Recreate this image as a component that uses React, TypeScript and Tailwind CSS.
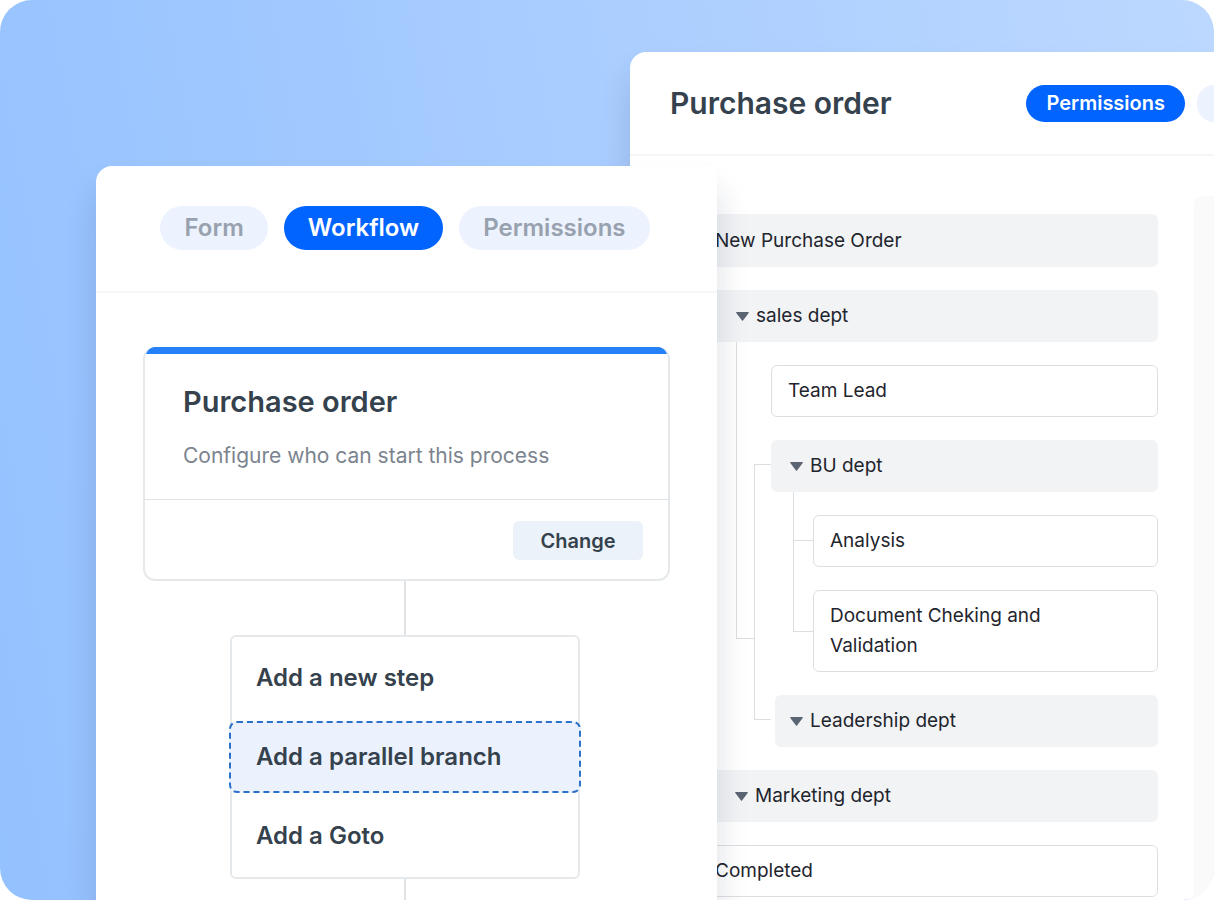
import React from 'react';

interface TabPillProps {
  label: string;
  active?: boolean;
}

interface TreeRowProps {
  label: string;
  className?: string;
}

const TabPill: React.FC<TabPillProps> = ({ label, active }) => (
  <button
    type="button"
    className={`h-11 shrink-0 rounded-full px-6 text-2xl font-semibold ${active ? 'bg-[#0264ff] text-white' : 'bg-[#ecf2fe] text-[#98a1ae]'}`}
  >
    {label}
  </button>
);

const CaretIcon: React.FC<React.SVGProps<SVGSVGElement>> = (props) => (
  <svg {...props} xmlns="http://www.w3.org/2000/svg" width="13" height="9" viewBox="0 0 13 9" fill="currentColor">
    <path d="M0.8 0h11.4c.6 0 .9.6.5 1L7 8.500c-.3.4-.7.4-1 0L.3 1C-.1.6.2 0 .8 0Z" />
  </svg>
);

const GroupRow: React.FC<TreeRowProps> = ({ label, className = '' }) => (
  <button
    type="button"
    className={`flex items-center gap-[7px] rounded-md bg-[#f1f3f5] py-[11px] text-left text-[19px] leading-[30px] ${className}`}
  >
    <CaretIcon className="shrink-0 text-[#5b6472]" />
    {label}
  </button>
);

// Single step inside a department
const StepRow: React.FC<TreeRowProps> = ({ label, className = '' }) => (
  <div className={`rounded-md border border-[#dcdfe2] bg-white px-4 py-2.5 text-[19px] leading-[30px] ${className}`}>
    <span className="block max-w-[260px]">{label}</span>
  </div>
);

const WorkflowPanel: React.FC = () => (
  <section className="relative z-10 mt-[166px] ml-24 w-[621px] shrink-0 rounded-tl-2xl bg-white shadow-[0_24px_32px_rgba(20,35,70,0.15)]">
    <nav className="flex justify-center gap-4 border-b-2 border-[#f5f6f7] pt-10 pr-[3px] pb-[41px]">
      <TabPill label="Form" />
      <TabPill label="Workflow" active />
      <TabPill label="Permissions" />
    </nav>

    <div className="px-[47px] pt-[54px]">
      <div className="overflow-hidden rounded-xl border-2 border-t-0 border-[#e6e9eb]">
        <div className="h-[7px] bg-[#2680f8]" />
        <div className="border-b border-[#dfe3e6] px-[38px] pt-7 pb-[27px]">
          <h2 className="text-[29px] leading-10 font-semibold text-[#35424d]">Purchase order</h2>
          <p className="mt-[18px] text-[21px] leading-8 text-[#7b848e]">Configure who can start this process</p>
        </div>
        <div className="flex justify-end pt-[21px] pr-[25px] pb-[19px]">
          <button type="button" className="h-[39px] w-[130px] rounded-md bg-[#ecf2f9] text-xl font-semibold text-[#35424d]">
            Change
          </button>
        </div>
      </div>

      <div className="flex flex-col items-center pr-[3px]">
        <div className="h-[54px] w-[2px] bg-[#e0e3e5]" />

        <div className="flex w-[350px] flex-col gap-[7px] rounded-md border-2 border-[#e6e9eb] py-[5px] text-2xl font-semibold text-[#35424d]">
          <button type="button" className="h-[72px] px-6 text-left">Add a new step</button>
          <button type="button" className="-mx-[3px] h-[72px] rounded-lg border-2 border-dashed border-[#2b70c9] bg-[#ebf2fe] px-[25px] text-left">
            Add a parallel branch
          </button>
          <button type="button" className="h-[72px] px-6 text-left">Add a Goto</button>
        </div>

        <div className="h-10 w-[2px] bg-[#e0e3e5]" />
      </div>
    </div>
  </section>
);

const PermissionsPanel: React.FC = () => (
  <section className="mt-[52px] -ml-[87px] flex min-w-0 flex-1 flex-col overflow-hidden rounded-tl-2xl bg-white shadow-[0_24px_32px_rgba(20,35,70,0.15)]">
    <header className="flex items-center justify-between border-b-2 border-[#f5f6f7] py-[31px] pl-10">
      <h1 className="text-3xl leading-10 font-semibold text-[#35424d]">Purchase order</h1>
      <div className="flex gap-3">
        <button type="button" className="h-[37px] rounded-full bg-[#0264ff] px-5 text-xl font-semibold text-white">
          Permissions
        </button>
        <button type="button" aria-label="More" className="h-[37px] w-[17px] rounded-l-full bg-[#ecf2fe]" />
      </div>
    </header>

    <div className="flex flex-1 pt-10 pl-[68px] text-[#1f252d]">
      <div className="flex flex-1 flex-col gap-[23px] pt-[18px] pr-9">
        <div className="rounded-md bg-[#f1f3f5] px-[17px] pt-3 pb-[11px] text-[19px] leading-[30px]">New Purchase Order</div>

        <div className="flex flex-col">
          <GroupRow label="sales dept" className="pl-[38px]" />
          <div className="flex">
            <div className="mb-[108px] ml-[38px] w-[18px] border-b border-l border-[#dcdfe2]" />
            <div className="mt-[122px] mb-[27px] w-[17px] border-y border-l border-[#dcdfe2]" />
            <div className="flex flex-1 flex-col gap-[23px] pt-[23px]">
              <StepRow label="Team Lead" />
              <div className="flex flex-col">
                <GroupRow label="BU dept" className="pl-[19px]" />
                <div className="flex">
                  <div className="mb-10 ml-[22px] flex w-5 flex-col border-l border-[#dcdfe2]">
                    <div className="h-[49px] border-b border-[#dcdfe2]" />
                    <div className="flex-1 border-b border-[#dcdfe2]" />
                  </div>
                  <div className="flex flex-1 flex-col gap-[23px] pt-[23px]">
                    <StepRow label="Analysis" />
                    <StepRow label="Document Cheking and Validation" />
                  </div>
                </div>
              </div>
              <GroupRow label="Leadership dept" className="ml-1 pl-[15px]" />
            </div>
          </div>
        </div>

        <GroupRow label="Marketing dept" className="pl-[37px]" />
        <StepRow label="Completed" />
      </div>
      <aside className="w-5 shrink-0 rounded-tl-lg bg-[#fafafb]" />
    </div>
  </section>
);

export default function App() {
  return (
    <div className="h-screen bg-white font-['Inter',sans-serif]">
      <main className="flex h-full overflow-hidden rounded-[32px] bg-[linear-gradient(80deg,#94c1ff,#bcd8ff)]">
        <WorkflowPanel />
        <PermissionsPanel />
      </main>
    </div>
  );
}
